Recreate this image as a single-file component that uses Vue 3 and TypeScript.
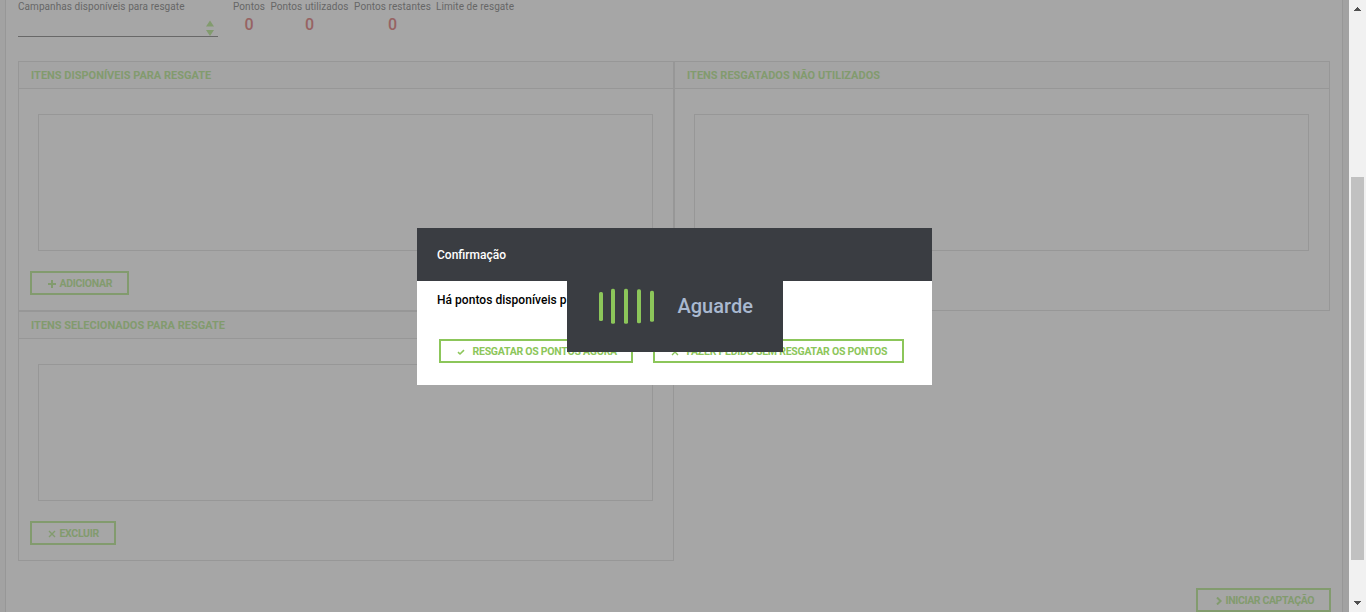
<script setup lang="ts">
interface Stat {
  label: string
  value: string
  kind: string
}

const stats: Stat[] = [
  { label: 'Pontos', value: '0', kind: 'total' },
  { label: 'Pontos utilizados', value: '0', kind: 'used' },
  { label: 'Pontos restantes', value: '0', kind: 'left' },
  { label: 'Limite de resgate', value: '', kind: 'limit' },
]
</script>

<template>
  <div class="screen">
    <main class="page">
      <section class="content">
        <div class="filters">
          <div class="campaign">
            <label class="caption">Campanhas disponíveis para resgate</label>
            <div class="select">
              <svg width="8" height="16" viewBox="0 0 8 16"><path d="M4 0.5L8 6.5H0ZM0 10H8L4 16Z" fill="#829b6e" /></svg>
            </div>
          </div>
          <div v-for="s in stats" :key="s.kind" class="stat" :class="s.kind">
            <span class="caption">{{ s.label }}</span>
            <strong>{{ s.value }}</strong>
          </div>
        </div>

        <div class="panels">
          <div class="panel">
            <h2>ITENS DISPONÍVEIS PARA RESGATE</h2>
            <div class="list"></div>
            <button class="btn add">
              <svg width="8" height="8" viewBox="0 0 8 8"><path d="M4 0V8M0 4H8" stroke="currentColor" stroke-width="2" /></svg>
              <span>ADICIONAR</span>
            </button>
          </div>
          <div class="panel">
            <h2>ITENS RESGATADOS NÃO UTILIZADOS</h2>
            <div class="list"></div>
          </div>
          <div class="panel">
            <h2>ITENS SELECIONADOS PARA RESGATE</h2>
            <div class="list"></div>
            <button class="btn remove">
              <svg width="8" height="8" viewBox="0 0 8 8"><path d="M1 1L7 7M7 1L1 7" stroke="currentColor" stroke-width="1.4" /></svg>
              <span>EXCLUIR</span>
            </button>
          </div>
        </div>

        <div class="footer">
          <button class="btn start">
            <svg width="6" height="8" viewBox="0 0 6 8"><path d="M1 0.5L4.6 4L1 7.5" fill="none" stroke="currentColor" stroke-width="2" /></svg>
            <span>INICIAR CAPTAÇÃO</span>
          </button>
        </div>
      </section>
    </main>

    <aside class="scrollbar">
      <svg class="up" width="7" height="4" viewBox="0 0 7 4" shape-rendering="crispEdges"><path d="M3 0H4V1H5V2H6V3H7V4H0V3H1V2H2V1H3Z" fill="#505050" /></svg>
      <div class="thumb"></div>
      <svg class="down" width="7" height="4" viewBox="0 0 7 4" shape-rendering="crispEdges"><path d="M0 0H7V1H6V2H5V3H4V4H3V3H2V2H1V1H0Z" fill="#505050" /></svg>
    </aside>

    <div class="modal">
      <header>Confirmação</header>
      <p>Há pontos disponíveis p</p>
      <div class="actions">
        <button class="btn now">
          <svg width="8" height="8" viewBox="0 0 8 8"><path d="M1 4.2L3 6L7 2.2" fill="none" stroke="currentColor" stroke-width="1.6" /></svg>
          <span>RESGATAR OS PONTOS AGORA</span>
        </button>
        <button class="btn skip">
          <svg width="8" height="8" viewBox="0 0 8 8"><path d="M1 1L7 7M7 1L1 7" stroke="currentColor" stroke-width="1.4" /></svg>
          <span>FAZER PEDIDO SEM RESGATAR OS PONTOS</span>
        </button>
      </div>
    </div>

    <div class="loader">
      <svg width="56" height="36" viewBox="0 0 56 36" fill="#8cc65a">
        <rect x="0" y="4" width="4" height="29" rx="1.6" />
        <rect x="12" y="0.8" width="4" height="35" rx="1.6" />
        <rect x="25" y="0.8" width="4" height="35" rx="1.6" />
        <rect x="38" y="1.3" width="4" height="34" rx="1.6" />
        <rect x="51" y="2.8" width="4" height="31" rx="1.6" />
      </svg>
      <span>Aguarde</span>
    </div>
  </div>
</template>

<style>
html, body { margin: 0; overflow: hidden; }
</style>

<style scoped>
* { box-sizing: border-box; }
.screen {
  position: relative;
  display: flex;
  width: 1366px;
  height: 612px;
  overflow: hidden;
  background: #a2a2a2;
  font-family: Roboto, "Liberation Sans", sans-serif;
}
.page { width: 1349px; height: 612px; padding: 0 6px 0 5px; }
.content {
  height: 612px;
  padding: 0 12px;
  background: #a6a6a6;
  border: solid #979797;
  border-width: 0 1px;
}
.filters { display: flex; height: 61px; color: #666; }
.caption { display: block; height: 13px; font-size: 10px; letter-spacing: 0.07px; line-height: 13px; white-space: nowrap; }
.campaign { width: 215px; }
.select {
  display: flex;
  justify-content: flex-end;
  width: 200px;
  height: 24px;
  padding: 7px 4px 0 0;
  border-bottom: 1px solid #686868;
}
.stat { text-align: center; }
.stat strong { display: block; font-size: 16px; font-weight: 500; line-height: 23px; color: #976363; }
.total { width: 32px; margin-right: 5px; }
.used { width: 79px; margin-right: 5px; }
.left { width: 77px; margin-right: 5px; }
.panels { display: grid; grid-template-columns: 656px 656px; grid-auto-rows: 250px; }
.panel { border: 1px solid #979797; }
h2 {
  height: 27px;
  margin: 0;
  padding: 1px 0 0 12px;
  border-bottom: 1px solid #979797;
  background: #a4a4a4;
  color: #829b6e;
  font-size: 11px;
  font-weight: 700;
  line-height: 26px;
}
.list { width: 615px; height: 137px; margin: 25px 0 0 19px; border: 1px solid #979797; }
.btn {
  display: flex;
  align-items: center;
  height: 24px;
  padding: 0 0 0 16px;
  border: 2px solid #829b6e;
  background: transparent;
  color: #829b6e;
  font: 700 10.5px/20px Roboto, "Liberation Sans", sans-serif;
  letter-spacing: -0.31px;
  white-space: nowrap;
}
.btn svg { flex: none; margin-top: 2px; }
.btn span { margin-left: 3.5px; padding-top: 1px; }
.add, .remove { margin: 20px 0 0 11px; }
.add { width: 99px; }
.remove { width: 86px; }
.footer { display: flex; justify-content: flex-end; padding-top: 27px; }
.start { width: 135px; margin-right: -1px; padding-left: 18px; letter-spacing: -0.38px; }
.scrollbar { position: relative; width: 17px; height: 612px; padding: 177px 2px 0; background: #f1f1f1; }
.thumb { width: 13px; height: 383px; background: #c1c1c1; }
.up { position: absolute; left: 5px; top: 7px; }
.down { position: absolute; left: 5px; top: 601px; }
.modal { position: absolute; left: 417px; top: 228px; width: 515px; height: 157px; background: #fff; }
.modal header { height: 53px; padding: 1px 0 0 20px; background: #3a3d42; color: #fff; font-size: 12px; font-weight: 500; line-height: 53px; }
.modal p { height: 58px; margin: 0; padding: 10px 0 0 20px; color: #000; font-size: 12px; font-weight: 500; letter-spacing: 0.04px; line-height: 18px; }
.actions { display: flex; gap: 20px; padding-left: 22px; }
.modal .btn { border-color: #8cc65a; color: #8cc65a; letter-spacing: -0.25px; }
.modal .btn span { margin-left: 7.5px; }
.now { width: 194px; }
.skip { width: 251px; }
.loader {
  position: absolute;
  left: 567px;
  top: 260px;
  display: flex;
  align-items: center;
  width: 216px;
  height: 92px;
  padding-left: 32px;
  background: #3a3d42;
  color: #a9b9d0;
  font-size: 20px;
  font-weight: 500;
}
.loader span { margin-left: 22.5px; }
</style>
